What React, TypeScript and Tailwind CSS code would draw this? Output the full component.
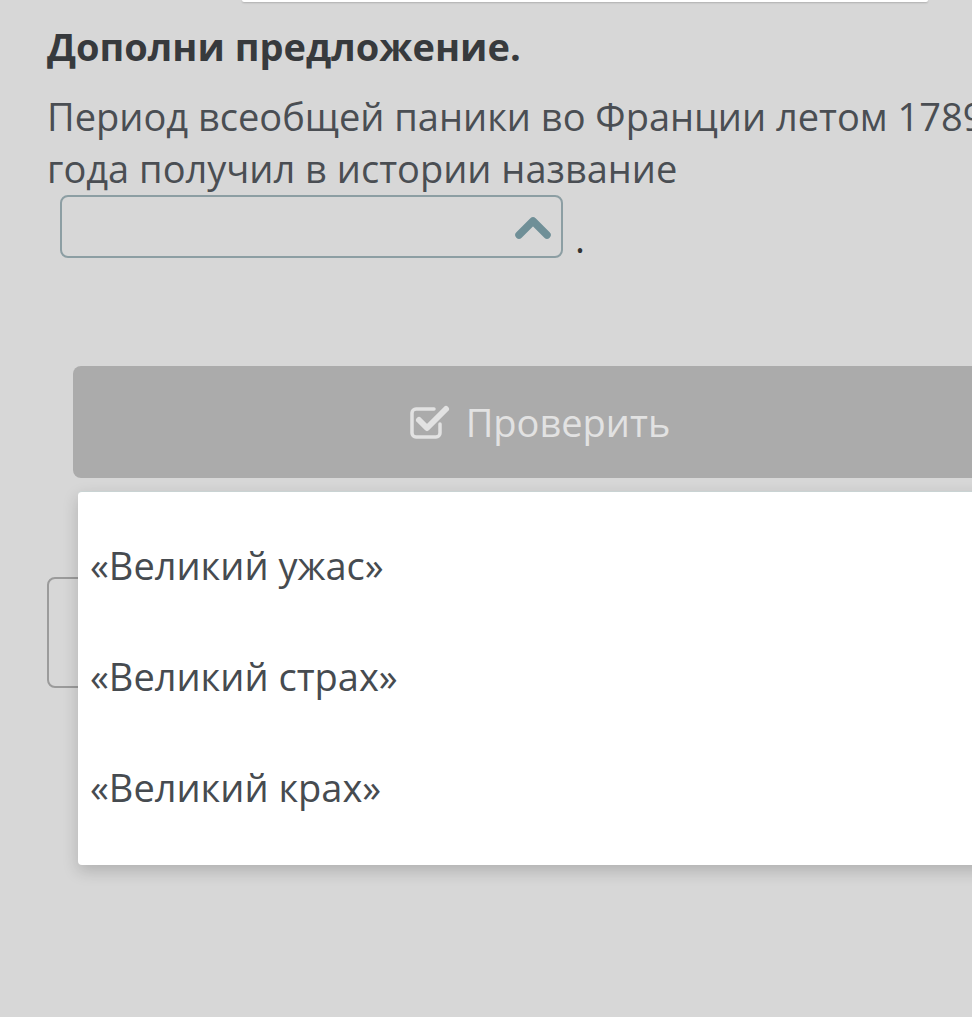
import { ReactNode } from "react";

const options = ["«Великий ужас»", "«Великий страх»", "«Великий крах»"];

function ChevronUp() {
	return (
		<svg width="38" height="28" viewBox="0 0 38 28" className="shrink-0">
			<path d="M5 22 L19 8 L33 22" fill="none" stroke="#6f8f97" strokeWidth="7.5" strokeLinecap="round" strokeLinejoin="round" />
		</svg>
	);
}

function CheckSquare() {
	return (
		<svg width="42" height="36" viewBox="0 0 42 36" className="shrink-0">
			<path
				d="M30 20 V29 a4 4 0 0 1 -4 4 H6 a4 4 0 0 1 -4 -4 V9 a4 4 0 0 1 4 -4 H24"
				fill="none"
				stroke="#e2e2e2"
				strokeWidth="3.5"
				strokeLinecap="round"
			/>
			<path d="M9 16 L17 24 L36 5" fill="none" stroke="#e2e2e2" strokeWidth="6" strokeLinecap="round" strokeLinejoin="round" />
		</svg>
	);
}

function Dropdown({ children }: { children: ReactNode }) {
	return (
		<div className="absolute top-[491px] left-[78px] w-[960px] h-[374px] bg-white rounded-[4px] border-t border-[#c9d3d3] shadow-[0_6px_16px_rgba(0,0,0,0.18)] flex flex-col justify-center gap-[70px] pl-[12px] pb-[4px]">
			{children}
		</div>
	);
}

export default function App() {
	return (
		<div className="relative w-[972px] h-[1017px] overflow-hidden bg-[#d7d7d7] font-['Open_Sans',sans-serif]">
			<div className="ml-[242px] w-[686px] h-[2px] bg-white rounded-b shadow-[0_1px_2px_rgba(0,0,0,0.2)]" />

			<div className="pl-[47px]">
				<h1 className="mt-[19px] text-[38px] leading-[50px] font-bold text-[#373a3d]">Дополни предложение.</h1>

				<p className="mt-[19px] whitespace-nowrap text-[38px] leading-[52px] text-[#4a4e53]">
					Период всеобщей паники во Франции летом 1789
					<br />
					года получил в истории название
				</p>

				<div className="mt-[1px] ml-[13px] flex items-end gap-[12px]">
					<div className="w-[503px] h-[63px] rounded-lg border-2 border-[#8c9ea3] flex items-center justify-end pr-[9px]">
						<ChevronUp />
					</div>
					<span className="text-[38px] leading-[40px] text-[#333]">.</span>
				</div>
			</div>

			<button className="mt-[108px] ml-[73px] w-[934px] h-[112px] rounded-lg bg-[#ababab] flex items-center justify-center gap-[14px] text-[38px] text-[#e2e2e2]">
				<CheckSquare />
				<span>Проверить</span>
			</button>

			<div className="mt-[99px] ml-[47px] w-[400px] h-[111px] rounded-lg border-2 border-[#9b9b9b]" />

			<Dropdown>
				{options.map((o) => (
					<div key={o} className="text-[38px] leading-[41px] text-[#464b50]">
						{o}
					</div>
				))}
			</Dropdown>
		</div>
	);
}
